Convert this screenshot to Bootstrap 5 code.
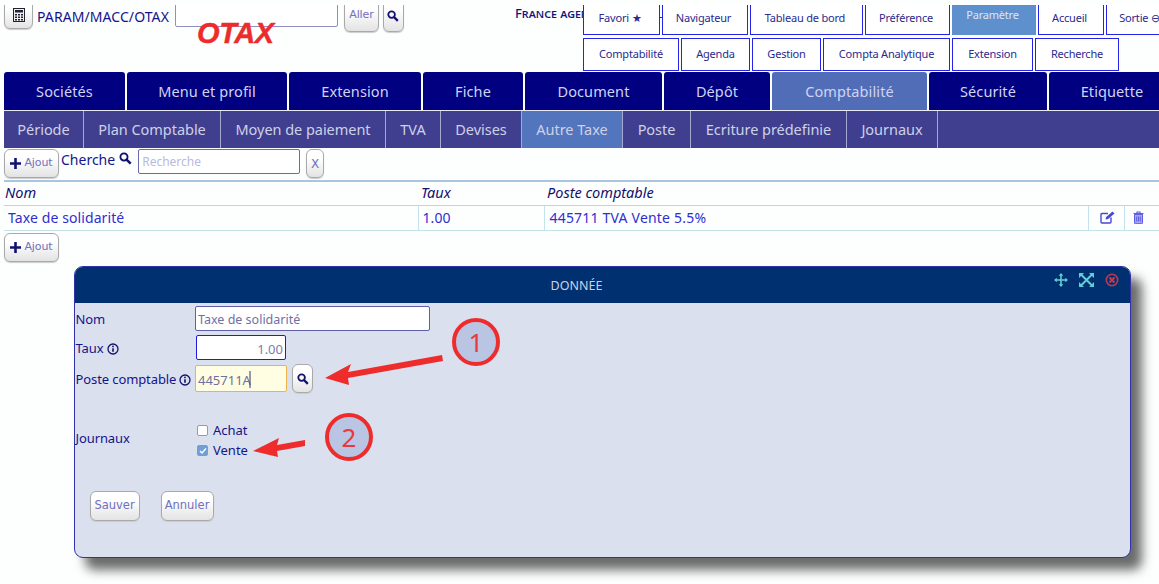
<!DOCTYPE html>
<html lang="fr">
<head>
<meta charset="utf-8">
<title>OTAX</title>
<link href="https://cdn.jsdelivr.net/npm/bootstrap@5.3.0/dist/css/bootstrap.min.css" rel="stylesheet">
<style>
html,body{height:100%;overflow:hidden}
body{background:#fdfefe;font-family:"Noto Sans",sans-serif;font-size:14px;color:#14148c;position:relative}
svg{display:block}
.top-head{height:67px;margin-top:5px;overflow:hidden;position:relative;padding-left:4px;display:flex;align-items:flex-start;width:1159px}
.old-btn{font-family:"DejaVu Sans",sans-serif;font-size:11px;letter-spacing:-.1px;color:#7070c0;background:linear-gradient(#fff 30%,#e3e3e3);border:1.5px solid #a9a9a9;border-radius:6px;padding:0;display:inline-flex;align-items:center;justify-content:center;box-shadow:0 1px 1px #ccc}
.calc-btn{width:29px;height:29px;margin-top:-5px;flex:none}
.path-text{margin:3px 0 0 4px;font-size:14px;line-height:18px;letter-spacing:.08px;flex:none}
.go-input{width:163px;height:24px;margin:-2px 0 0 6px;border:1px solid #8f8fc0;background:#fff;border-radius:2px;flex:none}
.otax-logo{position:absolute;left:197px;top:12px;font:italic bold 29px/32px "Liberation Sans",sans-serif;color:#ee2b2b;letter-spacing:-.4px;-webkit-text-stroke:.4px #ee2b2b}
.go-btn{width:35px;height:33px;margin:-6px 0 0 6px;flex:none}
.find-btn{width:21px;height:33px;margin:-6px 0 0 4px;flex:none}
.agency{position:absolute;left:515px;top:0;white-space:nowrap;font:500 13px/16px "Noto Sans",sans-serif;font-variant:small-caps;color:#14147c}
.top-menu{position:absolute;left:583px;top:-6px;display:grid;row-gap:3px}
.menu-a,.menu-b{display:grid;column-gap:2px}
.menu-a{grid-template-columns:77px 86px 113px 85px 84px 66px 70px;height:36px}
.menu-b{grid-template-columns:96px 69px 69px 127px 81px 84px;height:33px}
.menu-cell{background:#fff;border:1.5px solid #2424e8;color:#2a2a90;font-size:11px;letter-spacing:-.2px;display:flex;align-items:center;justify-content:center;white-space:nowrap;overflow:hidden;text-decoration:none}
.menu-a .menu-cell{padding:2px 3px 0 0}
.menu-a .menu-on{background:#5d90cc;border-color:#5d90cc;color:#dfe6f5;padding:0 3px 4px 0}
.tab-main{display:grid;grid-template-columns:121px 160px 132px 100px 137px 106px 155px 118px 126px;column-gap:2px;padding-left:4px;height:38px;width:1180px;overflow:hidden}
.tab-main a{background:#000080;border-radius:3px 3px 0 0;color:#cfd4f0;text-decoration:none;display:flex;align-items:center;justify-content:center;font-size:14.5px;letter-spacing:.1px;padding-top:1px}
.tab-main a.tab-on{background:#516db8}
.tab-sub{display:flex;margin:0 0 0 4px;height:38px;background:#403f8f;border-top:1px solid #e8ebf5}
.tab-sub a{color:#cdd1e8;text-decoration:none;display:flex;align-items:center;justify-content:center;font-size:14.5px;letter-spacing:-.04px;border-right:1px solid #a5a8d0;flex:none}
.tab-sub a.tab-on{background:#5375bd}
.w1{width:80px}.w2{width:137px}.w3{width:165px}.w4{width:55px}.w5{width:81px}.w6{width:101px}.w7{width:68px}.w8{width:156px}.w9{width:91px}
.tool-row{display:flex;align-items:flex-start;padding:1px 0 0 4px;height:32px}
.add-btn{width:55px;height:29px;gap:3px}
.seek-label{margin:2px 0 0 2px;font-size:14px;line-height:18px}
.seek-icon{margin:3px 0 0 4px}
.seek-input{width:162px;height:25px;margin-left:6px;border:1px solid #6a6aa8;border-radius:2px;padding:0 3px;font-size:12px;font-family:"Noto Sans",sans-serif;background:#fff}
.seek-input::placeholder{color:#b9b9dc}
.clear-btn{width:18px;height:29px;margin-left:6px;font-size:12px}
.grid-wrap{margin-left:4px;width:1155px;table-layout:fixed;border-collapse:collapse;margin-bottom:0}
.cn{width:414px}.ct{width:126px}.cp{width:544px}.ce{width:36px}.cd{width:35px}
.grid-wrap th{font-weight:400;font-style:italic;font-size:14.5px;line-height:18px;color:#10106e;padding:0 0 2px 3px;height:24px;border:0;border-top:2px solid #a9c6e0;border-bottom:1.5px solid #b5d8e5;background:transparent;vertical-align:middle}
.grid-wrap th:first-child{padding-left:1px}
.grid-wrap td{height:25px;line-height:18px;padding:0 0 0 4px;font-size:14px;letter-spacing:.1px;color:#2f2fd0;border:0;border-bottom:1.5px solid #c5e2ec;border-right:1px solid #c5e2ec;background:transparent;vertical-align:middle}
.grid-wrap td:last-child{border-right:0}
.grid-wrap td.post-cell{padding-left:5px;letter-spacing:.2px}
.grid-wrap .ic-cell{padding:0 0 0 11px}
.grid-wrap .ic-last{padding-left:8px}
.add-below{margin:2px 0 0 4px}
.dlg{position:absolute;left:74px;top:266px;width:1057px;height:292px;background:#dbe0ee;border:1.5px solid #3232a8;border-radius:9px;box-shadow:11px 12px 11px #6b6b6b;overflow:hidden}
.dlg-head{height:36px;background:#00306f;color:#c9d3e8;font-size:12.5px;display:flex;align-items:center;justify-content:center;position:relative;padding:2px 52px 0 0}
.dlg-tools{position:absolute;right:11px;top:6px;display:flex;gap:11px}
.dlg-body{padding:3px 0 0 .5px}
.f-row{display:flex;align-items:center}
.f-label{width:119.5px;flex:none;font-size:13px;display:flex;align-items:center;gap:3px;letter-spacing:-.1px;padding-top:2px}
.f-input{border:1.5px solid #5f5fa8;border-radius:2px;background:#fff;font-family:"Noto Sans",sans-serif;font-size:12.5px;color:#7070a8;padding:2px 2px 0;height:25px}
.in-nom{width:235px}
.in-taux{width:90px;text-align:right;margin-left:1px;border-color:#1c1ce0;color:#7c7cac;font-size:13px}
.in-poste{width:92px;height:27px;border-color:#eeb14e;background:#fffee2;font-size:13px;color:#6f6fa0}
.poste-find{width:21px;height:29px;margin-left:5px}
.journ-row{margin-top:29px}
.journ-row .f-label{padding:0 0 4px}
.check-list{display:flex;flex-direction:column;gap:3px;margin-left:2px}
.check-line{display:flex;align-items:center;gap:5px;line-height:17px;font-size:13px;margin:0}
.box{width:11px;height:11px;border:1px solid #9a9a9a;border-radius:2px;background:#fff;flex:none}
.box.on{background:#6f9fd6;border-color:#6f9fd6;display:flex;align-items:center;justify-content:center}
.act-row{display:flex;gap:21px;padding-left:14px;margin-top:32px}
.act-btn{height:30px;font-size:11.5px;letter-spacing:0}
.b1{width:50px}.b2{width:53px}
.marks{position:absolute;left:0;top:0;pointer-events:none}
</style>
</head>
<body>
<header class="top-head">
  <button class="old-btn calc-btn" type="button" aria-label="Calculatrice"><svg width="12" height="14" viewBox="0 0 12 14"><rect x=".5" y=".5" width="11" height="13" fill="#eee" stroke="#223"/><rect x="2" y="2" width="8" height="2.5" fill="#223"/><path d="M2 6h2v1.5H2zM5 6h2v1.5H5zM8 6h2v1.5H8zM2 8.5h2V10H2zM5 8.5h2V10H5zM8 8.5h2V10H8zM2 11h2v1.5H2zM5 11h2v1.5H5zM8 11h2v1.5H8z" fill="#223"/></svg></button>
  <span class="path-text">PARAM/MACC/OTAX</span>
  <div class="go-input"></div>
  <button class="old-btn go-btn" type="button">Aller</button>
  <button class="old-btn find-btn" type="button" aria-label="Chercher"><svg width="12" height="12" viewBox="0 0 12 12"><circle cx="4.6" cy="4.6" r="3.3" fill="none" stroke="#11116e" stroke-width="1.8"/><path d="M7 7l3.8 3.8" stroke="#11116e" stroke-width="2.4"/></svg></button>
  <span class="otax-logo">OTAX</span>
  <span class="agency">France agence comptable 2</span>
  <nav class="top-menu">
    <div class="menu-a">
      <a class="menu-cell" href="#">Favori&nbsp;★</a><a class="menu-cell" href="#">Navigateur</a><a class="menu-cell" href="#">Tableau de bord</a><a class="menu-cell" href="#">Préférence</a><a class="menu-cell menu-on" href="#">Paramètre</a><a class="menu-cell" href="#">Accueil</a><a class="menu-cell" href="#">Sortie&nbsp;⊖</a>
    </div>
    <div class="menu-b">
      <a class="menu-cell" href="#">Comptabilité</a><a class="menu-cell" href="#">Agenda</a><a class="menu-cell" href="#">Gestion</a><a class="menu-cell" href="#">Compta Analytique</a><a class="menu-cell" href="#">Extension</a><a class="menu-cell" href="#">Recherche</a>
    </div>
  </nav>
</header>
<nav class="tab-main">
  <a href="#">Sociétés</a><a href="#">Menu et profil</a><a href="#">Extension</a><a href="#">Fiche</a><a href="#">Document</a><a href="#">Dépôt</a><a class="tab-on" href="#">Comptabilité</a><a href="#">Sécurité</a><a href="#">Etiquette</a>
</nav>
<nav class="tab-sub">
  <a class="w1" href="#">Période</a><a class="w2" href="#">Plan Comptable</a><a class="w3" href="#">Moyen de paiement</a><a class="w4" href="#">TVA</a><a class="w5" href="#">Devises</a><a class="w6 tab-on" href="#">Autre Taxe</a><a class="w7" href="#">Poste</a><a class="w8" href="#">Ecriture prédefinie</a><a class="w9" href="#">Journaux</a>
</nav>
<div class="tool-row">
  <button class="old-btn add-btn" type="button"><svg width="11" height="11" viewBox="0 0 11 11"><path d="M5.5 0v11M0 5.5h11" stroke="#12126e" stroke-width="2.6"/></svg>Ajout</button>
  <span class="seek-label">Cherche</span>
  <svg class="seek-icon" width="13" height="13" viewBox="0 0 12 12"><circle cx="4.6" cy="4.6" r="3.3" fill="none" stroke="#11116e" stroke-width="1.7"/><path d="M7 7l3.8 3.8" stroke="#11116e" stroke-width="2.3"/></svg>
  <input class="seek-input" placeholder="Recherche" aria-label="Recherche">
  <button class="old-btn clear-btn" type="button">X</button>
</div>
<table class="table grid-wrap">
  <colgroup><col class="cn"><col class="ct"><col class="cp"><col class="ce"><col class="cd"></colgroup>
  <thead><tr><th>Nom</th><th>Taux</th><th>Poste comptable</th><th></th><th></th></tr></thead>
  <tbody><tr>
    <td>Taxe de solidarité</td><td>1.00</td><td class="post-cell">445711 TVA Vente 5.5%</td>
    <td class="ic-cell"><svg width="16" height="13" viewBox="0 0 16 13"><path d="M11 6.5V11a1 1 0 0 1-1 1H2a1 1 0 0 1-1-1V3.5a1 1 0 0 1 1-1h6" fill="none" stroke="#4747d8" stroke-width="1.4"/><path d="M5.5 8.5l.7-2.6L12.5.6l2 2-6.3 5.3z" fill="#4747d8"/></svg></td>
    <td class="ic-cell ic-last"><svg width="11" height="13" viewBox="0 0 11 13"><path d="M.5 2.5h10M4 2.5V1h3v1.5" fill="none" stroke="#5c5ce6" stroke-width="1.2"/><path d="M1.5 3.5h8V12a.7.7 0 0 1-.7.7H2.2a.7.7 0 0 1-.7-.7z" fill="#a8a8f0" stroke="#5c5ce6"/><path d="M3.7 5.5v5M5.5 5.5v5M7.3 5.5v5" stroke="#5c5ce6"/></svg></td>
  </tr></tbody>
</table>
<button class="old-btn add-btn add-below" type="button"><svg width="11" height="11" viewBox="0 0 11 11"><path d="M5.5 0v11M0 5.5h11" stroke="#12126e" stroke-width="2.6"/></svg>Ajout</button>

<section class="dlg">
  <div class="dlg-head">DONNÉE
    <div class="dlg-tools">
      <svg width="14" height="14" viewBox="0 0 14 14"><path d="M7 1v12M1 7h12" stroke="#62cfd6" stroke-width="1.6"/><path d="M7 0l2.3 2.8H4.7zM7 14l2.3-2.8H4.7zM0 7l2.8-2.3v4.6zM14 7l-2.8-2.3v4.6z" fill="#62cfd6"/></svg>
      <svg width="15" height="14" viewBox="0 0 15 14"><path d="M2 1.5l11 11M13 1.5l-11 11" stroke="#62cfd6" stroke-width="2"/><path d="M0 0h5L0 5zM15 0h-5l5 5zM0 14h5L0 9zM15 14h-5l5-5z" fill="#62cfd6"/></svg>
      <svg width="14" height="14" viewBox="0 0 14 14"><circle cx="7" cy="7" r="5.7" fill="none" stroke="#c23a52" stroke-width="1.6"/><path d="M4.5 4.5l5 5M9.5 4.5l-5 5" stroke="#c23a52" stroke-width="2"/></svg>
    </div>
  </div>
  <div class="dlg-body">
    <div class="f-row"><label class="f-label">Nom</label><input class="f-input in-nom" value="Taxe de solidarité" aria-label="Nom"></div>
    <div class="f-row mt-1"><label class="f-label">Taux <svg width="12" height="12" viewBox="0 0 12 12"><circle cx="6" cy="6" r="5" fill="none" stroke="#11116e" stroke-width="1.3"/><path d="M6 5.2v3.6" stroke="#11116e" stroke-width="1.6"/><circle cx="6" cy="3.4" r=".9" fill="#11116e"/></svg></label><input class="f-input in-taux" value="1.00" aria-label="Taux"></div>
    <div class="f-row mt-1"><label class="f-label">Poste comptable <svg width="12" height="12" viewBox="0 0 12 12"><circle cx="6" cy="6" r="5" fill="none" stroke="#11116e" stroke-width="1.3"/><path d="M6 5.2v3.6" stroke="#11116e" stroke-width="1.6"/><circle cx="6" cy="3.4" r=".9" fill="#11116e"/></svg></label><input class="f-input in-poste" value="445711A" aria-label="Poste comptable"><button class="old-btn poste-find" type="button" aria-label="Chercher"><svg width="12" height="12" viewBox="0 0 12 12"><circle cx="4.6" cy="4.6" r="3.3" fill="none" stroke="#11116e" stroke-width="1.8"/><path d="M7 7l3.8 3.8" stroke="#11116e" stroke-width="2.4"/></svg></button></div>
    <div class="f-row journ-row">
      <span class="f-label">Journaux</span>
      <div class="check-list">
        <label class="check-line"><span class="box"></span>Achat</label>
        <label class="check-line"><span class="box on"><svg width="8" height="8" viewBox="0 0 8 8"><path d="M1 4l2 2 4-4.5" fill="none" stroke="#fff" stroke-width="1.4"/></svg></span>Vente</label>
      </div>
    </div>
    <div class="act-row">
      <button class="old-btn act-btn b1" type="button">Sauver</button>
      <button class="old-btn act-btn b2" type="button">Annuler</button>
    </div>
  </div>
</section>

<svg class="marks" width="1159" height="584" viewBox="0 0 1159 584">
  <path d="M250 371v17" stroke="#33336e" stroke-width="1"/>
  <circle cx="476" cy="342" r="22" fill="#b9c5e2" stroke="#ee2c2c" stroke-width="4"/>
  <text x="476" y="352" text-anchor="middle" font-family="Noto Sans, sans-serif" font-size="26" fill="#e83a3a">1</text>
  <circle cx="349" cy="437" r="22" fill="#b9c5e2" stroke="#ee2c2c" stroke-width="4"/>
  <text x="349" y="447" text-anchor="middle" font-family="Noto Sans, sans-serif" font-size="26" fill="#e83a3a">2</text>
  <path d="M442 355L348 372L351 364L325 378L349 385L348 378L443 361Z" fill="#ee2c2c"/>
  <path d="M305 440L277 445L279 438L253 451L278 457L277 451L305 446Z" fill="#ee2c2c"/>
</svg>
</body>
</html>
